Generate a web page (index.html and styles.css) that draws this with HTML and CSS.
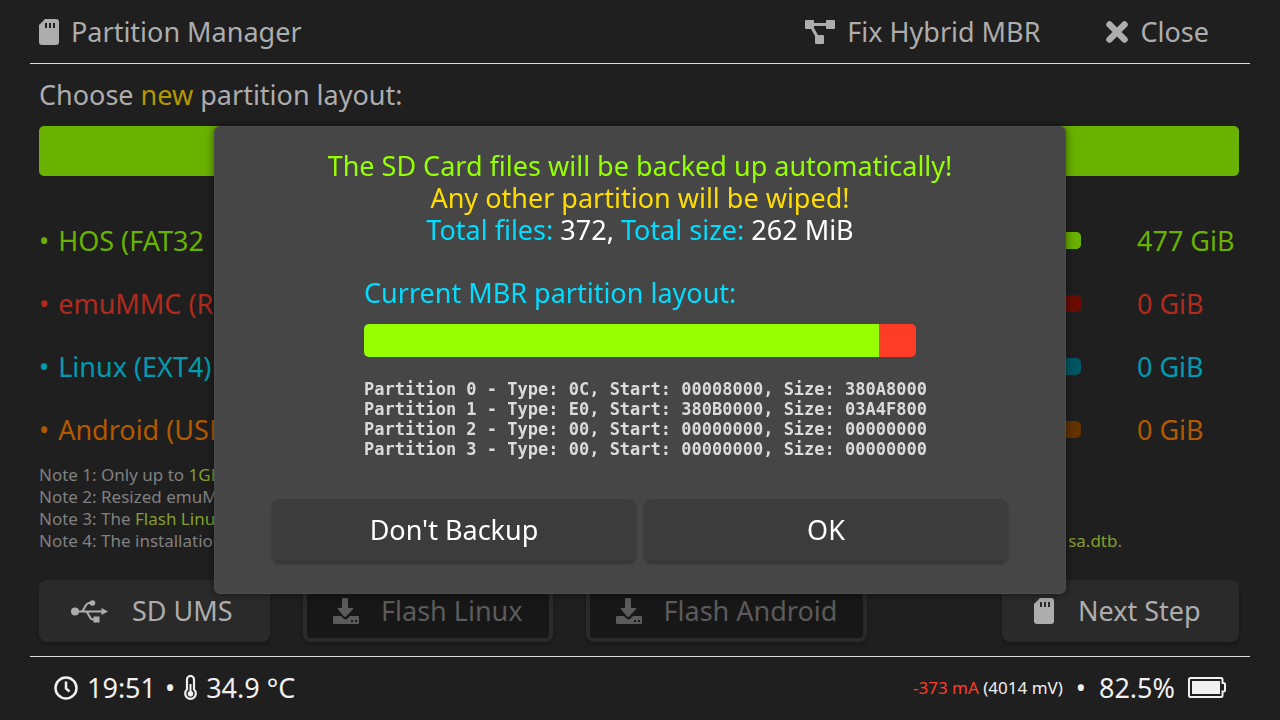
FILE: index.html
```html
<!DOCTYPE html>
<html lang="en">
<head>
<meta charset="utf-8">
<title>Partition Manager</title>
<meta name="viewport" content="width=device-width, initial-scale=1">
<link rel="stylesheet" href="styles.css">
</head>
<body>
<svg class="sprite" aria-hidden="true">
  <symbol id="sd" viewBox="0 0 20 26">
    <path fill-rule="evenodd" d="M6 0H17a3 3 0 0 1 3 3V23a3 3 0 0 1-3 3H3a3 3 0 0 1-3-3V6ZM6 4V9H8V4ZM10 4V9H12V4ZM14 4V9H16V4Z"/>
  </symbol>
  <symbol id="flash" viewBox="0 0 26 26">
    <path fill-rule="evenodd" d="M9 1a1 1 0 0 1 1-1h4a1 1 0 0 1 1 1V10h4.500c.8 0 1 .8.500 1.300L13 18.600q-1 .8-2 0L5 11.300C4.500 10.800 4.700 10 5.500 10H9ZM1 18H8l2.500 2.600q2 1.700 4 0L17 18h8a1 1 0 0 1 1 1v6a1 1 0 0 1-1 1H1a1 1 0 0 1-1-1v-6a1 1 0 0 1 1-1ZM18 22v2h2v-2ZM22 22v2h2v-2Z"/>
  </symbol>
</svg>

<div class="screen">
  <header class="topbar">
    <h1 class="title"><svg class="icon-sd" aria-hidden="true"><use href="#sd"/></svg>Partition Manager</h1>
    <nav class="actions">
      <button class="link-btn" type="button">
        <svg class="icon-tree" viewBox="0 0 30 24" aria-hidden="true"><path d="M1 0h7a1 1 0 0 1 1 1v2h12V1a1 1 0 0 1 1-1h7a1 1 0 0 1 1 1v7a1 1 0 0 1-1 1h-7a1 1 0 0 1-1-1V6H9v2l4 7h5a1 1 0 0 1 1 1v7a1 1 0 0 1-1 1h-7a1 1 0 0 1-1-1v-7l-4-7H1a1 1 0 0 1-1-1V1a1 1 0 0 1 1-1Z"/></svg>Fix Hybrid MBR
      </button>
      <button class="link-btn" type="button">
        <svg class="icon-close" viewBox="0 0 22 22" aria-hidden="true"><path d="M3.500 3.500 18.500 18.500M18.500 3.500 3.500 18.500" fill="none" stroke="currentColor" stroke-width="6.500" stroke-linecap="round"/></svg>Close
      </button>
    </nav>
  </header>

  <main class="content">
    <h2 class="heading">Choose <span class="new">new</span> partition layout:</h2>
    <div class="layout-bar"></div>

    <div class="row hos"><label for="hos"><b>•</b>HOS (FAT32</label><input id="hos" type="range" min="0" max="477" value="477"><output for="hos">477 GiB</output></div>
    <div class="row emu"><label for="emu"><b>•</b>emuMMC (R</label><input id="emu" type="range" min="0" max="477" value="0"><output for="emu">0 GiB</output></div>
    <div class="row linux"><label for="linux"><b>•</b>Linux (EXT4)</label><input id="linux" type="range" min="0" max="477" value="0"><output for="linux">0 GiB</output></div>
    <div class="row android"><label for="android"><b>•</b>Android (USE</label><input id="android" type="range" min="0" max="477" value="0"><output for="android">0 GiB</output></div>

    <div class="notes">
      <p>Note 1: Only up to <em>1GB</em></p>
      <p>Note 2: Resized emuM</p>
      <p>Note 3: The <em>Flash Linux</em></p>
      <p class="split"><span>Note 4: The installation</span><span><em>sa.dtb</em>.</span></p>
    </div>

    <div class="buttons">
      <button class="btn ums" type="button">
        <svg class="icon-usb" viewBox="0 0 37 23" aria-hidden="true"><circle cx="4" cy="11.500" r="4"/><circle cx="21.500" cy="3" r="2.800"/><path d="M30.500 8 37 11.500 30.500 15ZM22.500 16.500h6v6h-6Z"/><path d="M4 11.500H32M8 11.500h2c3.500 0 3.500-8 8-8.500h3M14 11.500c4.500 0 3.500 8 8 8h2" fill="none" stroke="currentColor" stroke-width="2"/></svg>SD UMS
      </button>
      <button class="btn flash" type="button" disabled><svg class="icon-flash" aria-hidden="true"><use href="#flash"/></svg>Flash Linux</button>
      <button class="btn flash" type="button" disabled><svg class="icon-flash" aria-hidden="true"><use href="#flash"/></svg>Flash Android</button>
      <button class="btn next" type="button"><svg class="icon-sd" aria-hidden="true"><use href="#sd"/></svg>Next Step</button>
    </div>
  </main>

  <footer class="status">
    <div class="group">
      <svg class="icon-clock" viewBox="0 0 24 24" aria-hidden="true"><circle cx="12" cy="12" r="10.500" fill="none" stroke="currentColor" stroke-width="2.500"/><path d="M12 5.500V12.500L15.500 15.500" fill="none" stroke="currentColor" stroke-width="2.500"/></svg>
      <span>19:51</span><span>•</span>
      <svg class="icon-temp" viewBox="0 0 13 25" aria-hidden="true"><path d="M3 4.500a3.500 3.500 0 0 1 7 0V14.500a5.300 5.300 0 1 1-7 0Z" fill="none" stroke="currentColor" stroke-width="2.200"/><path d="M6.500 9V18" stroke="currentColor" stroke-width="2"/><circle cx="6.500" cy="18.700" r="2.800"/></svg>
      <span class="temp">34.9 °C</span>
    </div>
    <div class="group power">
      <span class="small"><span class="drain">-373 mA</span> (4014 mV)</span><span class="sep">•</span><span>82.5%</span>
      <svg class="icon-battery" viewBox="0 0 38 21" aria-hidden="true"><path d="M2 1H33a1.500 1.500 0 0 1 1.500 1.500V6H35.500a1.500 1.500 0 0 1 1.500 1.500V13a1.500 1.500 0 0 1-1.500 1.500H34.500V18.500A1.500 1.500 0 0 1 33 20H2.500A1.500 1.500 0 0 1 1 18.500V2.500A1.500 1.500 0 0 1 2.500 1Z" fill="none" stroke="currentColor" stroke-width="2"/><path d="M4 4H32V17H4Z"/></svg>
    </div>
  </footer>
</div>

<div class="overlay">
  <section class="modal" role="dialog" aria-modal="true" aria-labelledby="message">
    <div class="message" id="message">
      <p class="green">The SD Card files will be backed up automatically!</p>
      <p class="yellow">Any other partition will be wiped!</p>
      <p><span class="cyan">Total files:</span> 372, <span class="cyan">Total size:</span> 262 MiB</p>
    </div>
    <div class="mbr">
      <h3 class="cyan">Current MBR partition layout:</h3>
      <div class="mbr-bar"></div>
      <pre>Partition 0 - Type: 0C, Start: 00008000, Size: 380A8000
Partition 1 - Type: E0, Start: 380B0000, Size: 03A4F800
Partition 2 - Type: 00, Start: 00000000, Size: 00000000
Partition 3 - Type: 00, Start: 00000000, Size: 00000000</pre>
    </div>
    <div class="choices">
      <button type="button">Don't Backup</button>
      <button type="button">OK</button>
    </div>
  </section>
</div>
</body>
</html>
```
FILE: styles.css
```css
* { box-sizing: border-box; }

body {
  margin: 0;
  background: #1f1f1f;
  color: #adadad;
  font: 27px/32px "Noto Sans", "Open Sans", sans-serif;
}

h1, h2, h3, p, pre { margin: 0; font-size: inherit; font-weight: inherit; }
button { font: inherit; color: inherit; background: none; border: 0; padding: 0; }
svg { fill: currentColor; flex: none; }
em { font-style: normal; }

.sprite { display: none; }
.icon-sd { width: 20px; height: 26px; }
.icon-flash { width: 26px; height: 26px; }
.icon-tree { width: 30px; height: 24px; }
.icon-close { width: 22px; height: 22px; }
.icon-usb { width: 37px; height: 23px; }
.icon-clock { width: 24px; height: 24px; }
.icon-temp { width: 13px; height: 25px; }
.icon-battery { width: 38px; height: 21px; }

.screen {
  min-height: 100vh;
  padding: 0 30px;
  display: flex;
  flex-direction: column;
}

/* Top bar */
.topbar {
  height: 64px;
  padding: 0 41px 0 9px;
  border-bottom: 1px solid #e0e0e0;
  display: flex;
  align-items: center;
  justify-content: space-between;
}
.title, .link-btn { display: flex; align-items: center; gap: 12px; }
.actions { display: flex; gap: 66px; }

/* Partition layout */
.content { flex: 1; padding: 15px 11px 0 9px; }
.new { color: #b29800; }
.layout-bar {
  height: 50px;
  margin: 15px 0 33px;
  border-radius: 5px;
  background: #6ab200;
}
.row {
  height: 63px;
  display: grid;
  grid-template-columns: 360px 1fr 102px;
  column-gap: 56px;
  align-items: center;
  white-space: nowrap;
}
.row label { display: flex; gap: 9px; }
.row b { font-weight: inherit; }
.row input {
  appearance: none;
  width: 100%;
  height: 17px;
  margin: 0;
  border-radius: 5px;
  background: var(--track);
  color: inherit;
}
.row input::-webkit-slider-thumb {
  appearance: none;
  width: 17px;
  height: 17px;
  border-radius: 5px;
  background: currentColor;
}
.hos { color: #6ab200; --track: #6ab200; }
.emu { color: #b22a1d; --track: #6b0c00; }
.linux { color: #009bb2; --track: #005664; }
.android { color: #b25900; --track: #643200; }

.notes { margin-top: 3px; color: #808080; font-size: 17px; line-height: 22px; }
.notes em { color: #849f2d; }
.split { display: flex; justify-content: space-between; padding-right: 117px; }

.buttons { display: flex; gap: 33px; margin-top: 28px; }
.btn {
  height: 62px;
  padding: 0 32px;
  border-radius: 8px;
  background: #2a2a2a;
  box-shadow: 0 3px 3px #191919;
  display: flex;
  align-items: center;
  gap: 24px;
}
.ums { min-width: 231px; }
.flash {
  padding: 0 26px;
  gap: 22px;
  border: 4px solid #2a2a2a;
  background: #171717;
  color: #5b5b5b;
}
.next { min-width: 237px; margin-left: auto; }

/* Status bar */
.status {
  height: 64px;
  padding: 0 24px 2px;
  border-top: 1px solid #e0e0e0;
  color: #f0f0f0;
  display: flex;
  align-items: center;
  justify-content: space-between;
}
.group { display: flex; align-items: center; gap: 9px; }
.power { gap: 13px; }
.small { font-size: 17px; }
.drain { color: #ff3c28; }

/* Backup dialog */
.overlay {
  position: fixed;
  inset: 0;
  display: flex;
  align-items: center;
  justify-content: center;
}
.modal {
  width: 852px;
  max-width: 100%;
  padding: 23px 57px 32px;
  border: 1px solid #4d4d4d;
  border-radius: 6px;
  background: #464646;
  box-shadow: 0 0 10px rgba(0, 0, 0, 0.5);
  color: #fff;
}
.message { text-align: center; }
.green { color: #96ff00; }
.yellow { color: #ffdd00; }
.cyan { color: #00ddff; }
.mbr { width: 552px; max-width: 100%; margin: 31px auto 0; }
.mbr-bar {
  height: 33px;
  margin: 15px 0 22px;
  border-radius: 5px;
  background: linear-gradient(to right, #96ff00 93.3%, #ff3c28 93.3%);
}
.mbr pre {
  color: #dbdbdb;
  font: bold 17px/20px "DejaVu Sans Mono", "Liberation Mono", monospace;
}
.choices { display: grid; grid-template-columns: 1fr 1fr; gap: 8px; margin-top: 40px; }
.choices button {
  height: 62px;
  border-radius: 8px;
  background: #3c3c3c;
  box-shadow: 0 3px 3px #353535;
}
```
